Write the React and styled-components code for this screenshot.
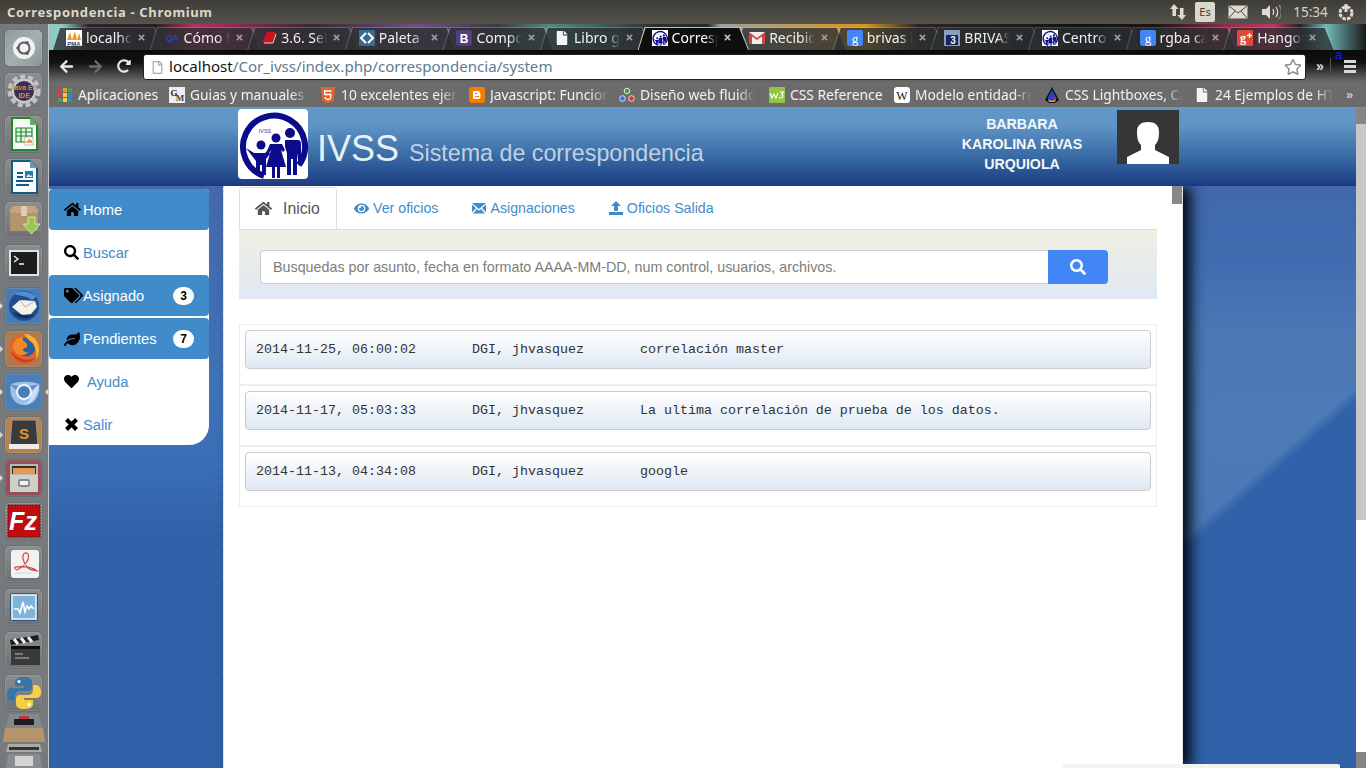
import React from "react"
import styled, { createGlobalStyle, css } from "styled-components"
import {
  FaHome, FaSearch, FaTags, FaLeaf, FaHeart, FaTimes, FaEye,
  FaArrowLeft, FaArrowRight, FaRedoAlt, FaRegFile, FaRegStar, FaFile,
} from "react-icons/fa"

const uiFont = `"Noto Sans", "Open Sans", sans-serif`
const webFont = `"Liberation Sans", Arial, sans-serif`

const Global = createGlobalStyle`
  html, body { margin: 0; padding: 0; height: 100%; overflow: hidden; background: #3161a9; }
  * { box-sizing: border-box; }
  #root { height: 100%; }
`

const Desktop = styled.div`
  position: relative;
  width: 1366px;
  height: 768px;
  overflow: hidden;
  display: flex;
  flex-direction: column;
  font-family: ${webFont};
`

/* ---- barra superior de ubuntu ---- */
const TitleBar = styled.div`
  height: 24px;
  flex: none;
  display: flex;
  align-items: center;
  padding: 0 8px 0 7px;
  background: linear-gradient(#3d3c37, #55534b);
`
const WindowTitle = styled.div`
  flex: 1;
  font: 700 13px ${uiFont};
  letter-spacing: 0.65px;
  color: #dcd8cc;
`
const Indicators = styled.div`
  display: flex;
  align-items: center;
  color: #dfdbd2;
`
const Indicator = styled.div`
  display: flex;
  align-items: center;
  justify-content: center;
  width: ${(p) => p.$w}px;
`
const LangBox = styled.div`
  width: 20px;
  height: 20px;
  border-radius: 2px;
  background: #dbd7cb;
  color: #3c3b37;
  font: 400 11px/20px ${uiFont};
  text-align: center;
`
const Clock = styled.div`
  font: 400 13.5px ${uiFont};
  width: 48px;
  padding-left: 1px;
  text-align: center;
  color: #d8d4c8;
`

const Workspace = styled.div`
  flex: 1;
  display: flex;
  min-height: 0;
`

/* ---- launcher ---- */
const Launcher = styled.div`
  width: 49px;
  flex: none;
  background: #777a7c;
  border-right: 1px solid #c4c6c6;
  padding: 6px 0 0 5px;
  display: flex;
  flex-direction: column;
  gap: 7px;
  overflow: hidden;
`
const Tile = styled.div`
  position: relative;
  width: 37px;
  height: 36px;
  flex: none;
  border-radius: 5px;
  display: flex;
  align-items: center;
  justify-content: center;
  background: ${(p) => p.$bg || "linear-gradient(#8b8e8f, #6f7274)"};
  box-shadow: inset 0 0 0 1px rgba(255, 255, 255, 0.1), 0 0 0 1px rgba(0, 0, 0, 0.08);
  ${(p) => p.$pip && css`
    &::before {
      content: "";
      position: absolute;
      left: -5px;
      top: 15px;
      border: 3px solid transparent;
      border-left: 3px solid #d8d8d8;
    }
  `}
  ${(p) => p.$pipRight && css`
    &::after {
      content: "";
      position: absolute;
      right: -6px;
      top: 15px;
      border: 3px solid transparent;
      border-right: 3px solid #d8d8d8;
    }
  `}
`

const UbuntuIcon = () => (
  <svg width="36" height="36" viewBox="0 0 36 36">
    <circle cx="18" cy="18" r="11" fill="#f2f2f2" />
    <circle cx="18" cy="18" r="5.6" fill="none" stroke="#5b5b5b" strokeWidth="2" />
    <circle cx="12" cy="18" r="1.7" fill="#5b5b5b" />
    <circle cx="21" cy="12.8" r="1.7" fill="#5b5b5b" />
    <circle cx="21" cy="23.2" r="1.7" fill="#5b5b5b" />
  </svg>
)
const JavaIcon = () => (
  <svg width="36" height="36" viewBox="0 0 36 36">
    <circle cx="18" cy="18" r="14.5" fill="none" stroke="#c4c4c4" strokeWidth="4" strokeDasharray="5 3" />
    <circle cx="18" cy="18" r="12.5" fill="#c9c9c9" />
    <circle cx="18" cy="18" r="10" fill="#3b2d55" />
    <text x="18" y="17" textAnchor="middle" fontSize="7" fontWeight="700" fill="#d88a2c" fontFamily="Liberation Sans">Java EE</text>
    <text x="18" y="25" textAnchor="middle" fontSize="7" fontWeight="700" fill="#d88a2c" fontFamily="Liberation Sans">IDE</text>
  </svg>
)
const DocShape = ({ color, fold, children }) => (
  <svg width="36" height="36" viewBox="0 0 36 36">
    <path d="M6 2h18l7 7v25H6z" fill="#fafafa" stroke={color} strokeWidth="2" />
    <path d="M24 1l8 8h-8z" fill={fold} />
    {children}
  </svg>
)
const CalcIcon = () => (
  <DocShape color="#1f8a25" fold="#5bb05f">
    <path d="M10 12h16v14H10z" fill="#e7f3e4" stroke="#1f8a25" strokeWidth="1.2" />
    <path d="M10 16h16M10 20h16M15 12v14M20 12v14" stroke="#1f8a25" strokeWidth="1.2" />
    <path d="M19 21h8v8h-8z" fill="#fff" stroke="#999" strokeWidth=".6" />
    <path d="M21 27v-2M23 27v-4M25 27v-3" stroke="#d9622b" strokeWidth="1.3" />
  </DocShape>
)
const WriterIcon = () => (
  <DocShape color="#135a86" fold="#6a97b6">
    <path d="M11 14h6M11 18h6M10 22h17M10 26h13" stroke="#135a86" strokeWidth="1.8" />
    <path d="M19 12h8v7h-8z" fill="#2c78a8" />
    <path d="M20 18l2.5-3 2 2 1-1 1 2z" fill="#e3eef5" />
  </DocShape>
)
const BoxIcon = () => (
  <svg width="36" height="36" viewBox="0 0 36 36">
    <path d="M4 8l3-4h22l3 4v21H4z" fill="#c2a67f" />
    <path d="M4 11h28v18H4z" fill="#b4946b" />
    <path d="M15 4h6v10h-6z" fill="#dccbb0" />
    <path d="M22 15h7v7h5l-8.5 10L17 22h5z" fill="#9ac653" stroke="#dfeebd" strokeWidth=".8" />
  </svg>
)
const TerminalIcon = () => (
  <svg width="36" height="36" viewBox="0 0 36 36">
    <path d="M3 5h30v26H3z" fill="#e2e2e2" />
    <path d="M5 7h26v22H5z" fill="#1d1d1d" />
    <path d="M8 11l4 3-4 3M13 19h5" fill="none" stroke="#f0f0f0" strokeWidth="1.4" />
  </svg>
)
const ThunderbirdIcon = () => (
  <svg width="36" height="36" viewBox="0 0 36 36">
    <circle cx="18" cy="18" r="15" fill="#1f4f8c" />
    <path d="M8 6c6-4 16-3 22 3l-4 3C22 8 14 8 8 6z" fill="#4f8ed0" />
    <path d="M6 19l8-7 15 1 2 6-6 7-9 1z" fill="#f4f1e8" />
    <path d="M14 12l5 7 10-6" fill="none" stroke="#b8b2a2" strokeWidth="1" />
    <path d="M7 24c4 6 14 9 22 3-4 1-12 1-22-3z" fill="#0f2f60" />
  </svg>
)
const FirefoxIcon = () => (
  <svg width="36" height="36" viewBox="0 0 36 36">
    <circle cx="18" cy="18" r="15" fill="#e5622a" />
    <circle cx="20" cy="16" r="9.5" fill="#2e5e9e" />
    <path d="M18 3c9 0 15 7 15 15 0 4-1 7-3 10 1-7-1-15-6-18-2-2-4-4-6-7z" fill="#f6b12f" />
    <path d="M9 10c2-3 5-4 8-4-1 2 0 4 2 5 3 2 3 5 0 6-4 1-1 5 3 4-3 5-11 4-14-2-2-3-1-6 1-9z" fill="#f08a24" />
    <path d="M5 20c2 8 10 13 18 11 3-1 5-2 7-5-7 5-18 3-25-6z" fill="#c9401d" />
  </svg>
)
const ChromiumIcon = () => (
  <svg width="36" height="36" viewBox="0 0 36 36">
    <path d="M5 10c8-3 20-3 28 0 2 10-4 21-15 21C8 31 2 20 5 10z" fill="#9cc0e6" />
    <path d="M4 10c8 3 20 3 29 0l-8 8c-2-3-10-3-13 0z" fill="#5f8fc6" />
    <path d="M25 18c1 6-3 13-9 13 9 1 16-9 17-21z" fill="#cfe0f2" />
    <circle cx="18" cy="18" r="7" fill="#4c7db9" stroke="#eef4fb" strokeWidth="2" />
  </svg>
)
const SublimeIcon = () => (
  <svg width="36" height="36" viewBox="0 0 36 36">
    <path d="M6 3h24l2 25H4z" fill="#3a3a3a" stroke="#9a9a9a" strokeWidth="1" />
    <path d="M3 27h30v5H3z" fill="#ececec" />
    <text x="18" y="22" textAnchor="middle" fontSize="15" fontWeight="700" fill="#e8912d" fontFamily="Liberation Sans">S</text>
  </svg>
)
const FilesIcon = () => (
  <svg width="36" height="36" viewBox="0 0 36 36">
    <path d="M4 4h28v28H4z" fill="#b9b9b6" />
    <path d="M6 6h24v8H6z" fill="#33302c" />
    <path d="M7 8h22v6H7z" fill="#e59a55" />
    <path d="M4 15h28v17H4z" fill="#cfcfcc" />
    <rect x="13" y="20" width="10" height="6" rx="1" fill="#f2f2f0" stroke="#6a6a68" strokeWidth="1.3" />
  </svg>
)
const FilezillaIcon = () => (
  <svg width="36" height="36" viewBox="0 0 36 36">
    <path d="M2 2h32v32H2z" fill="#bf0d12" stroke="#7c0a0c" strokeDasharray="2 1" />
    <text x="17" y="27" textAnchor="middle" fontSize="25" fontWeight="700" fontStyle="italic" fill="#fff" fontFamily="Liberation Sans">Fz</text>
  </svg>
)
const PdfIcon = () => (
  <svg width="36" height="36" viewBox="0 0 36 36">
    <rect x="5" y="4" width="28" height="28" rx="3" fill="#f2f2f2" />
    <path d="M9 21c8-1 18 0 22 4-4-1-7-1-9-3-5-5-7-13-3-15 4-1 5 5 1 10-3 4-7 6-9 7-2-1-3-2-2-3z" fill="none" stroke="#d8433e" strokeWidth="1.2" />
    <path d="M9 27h16" stroke="#ddd" strokeWidth="1.5" />
  </svg>
)
const MonitorIcon = () => (
  <svg width="36" height="36" viewBox="0 0 36 36">
    <rect x="4" y="4" width="28" height="28" rx="3" fill="#2e5d83" />
    <rect x="6" y="6" width="24" height="24" fill="#7fb4da" stroke="#eef6fb" strokeWidth="1.6" />
    <path d="M8 20l4 0 2 4 3-11 2 10 2-6 2 3 2-3 3 3" fill="none" stroke="#fff" strokeWidth="1.6" />
  </svg>
)
const ClapperIcon = () => (
  <svg width="36" height="36" viewBox="0 0 36 36">
    <path d="M5 14h29v19H5z" fill="#3a3a38" />
    <path d="M5 14h29v3H5z" fill="#111" />
    <path d="M4 8l28-5 1 5-28 5z" fill="#1d1d1d" />
    <path d="M8 7l4 5M15 6l4 5M22 5l4 5" stroke="#eee" strokeWidth="3" />
    <path d="M9 22h8M9 26h14" stroke="#bbb" strokeWidth="1.2" />
  </svg>
)
const PythonIcon = () => (
  <svg width="36" height="36" viewBox="0 0 36 36">
    <path d="M18 2c-6 0-9 2-9 5v4h9v2H6c-4 0-5 3-5 6s1 7 5 7h3v-5c0-3 2-5 5-5h8c3 0 4-2 4-4V7c0-3-3-5-8-5z" fill="#3a75a8" />
    <path d="M18 34c6 0 9-2 9-5v-4h-9v-2h12c4 0 5-3 5-6s-1-7-5-7h-3v5c0 3-2 5-5 5h-8c-3 0-4 2-4 4v5c0 3 3 5 8 5z" fill="#f7cf45" />
    <circle cx="13" cy="6.5" r="1.6" fill="#fff" />
    <circle cx="23" cy="29.5" r="1.6" fill="#fff" />
  </svg>
)

const launcherItems = [
  { icon: UbuntuIcon, bg: "linear-gradient(135deg, #8f999b, #a4b0b2 50%, #8a9496)" },
  { icon: JavaIcon },
  { icon: CalcIcon },
  { icon: WriterIcon },
  { icon: BoxIcon },
  { icon: TerminalIcon },
  { icon: ThunderbirdIcon, bg: "#4a7bb5", pip: true },
  { icon: FirefoxIcon, bg: "#ad7a52", pip: true },
  { icon: ChromiumIcon, bg: "#4b7db9", pip: true, pipRight: true },
  { icon: SublimeIcon, bg: "#b4834f", pip: true },
  { icon: FilesIcon, bg: "#96505c", pip: true },
  { icon: FilezillaIcon },
  { icon: PdfIcon },
  { icon: MonitorIcon },
  { icon: ClapperIcon },
  { icon: PythonIcon },
]

const LauncherFold = styled.svg`
  flex: none;
  margin: -4px 0 0 -5px;
`

/* ---- navegador ---- */
const Browser = styled.div`
  flex: 1;
  min-width: 0;
  display: flex;
  flex-direction: column;
`
const TabStrip = styled.div`
  height: 26px;
  flex: none;
  display: flex;
  padding: 3px 0 0 10px;
  background: linear-gradient(90deg, #8cc9c4 0, #8cc9c4 1%, #32202c 3%, #252025 8%, #b5305f 11%, #8f2b55 14%, #3a2836 20%, #6e4f80 28%, #3b3a48 34%, #4f8a7e 38%, #2c3030 46%, #1c2c2c 50%, #9aa0a0 51%, #d79320 62%, #2a2520 66%, #141414 78%, #1b1416 84%, #a02c50 90%, #c53262 93%, #272025 95%, #70b9b8 97%, #1a1a1a 100%);
`
const TabItem = styled.div`
  position: relative;
  width: 97.6px;
  flex: none;
  display: flex;
  align-items: center;
  padding: 0 0 2px 7px;
  color: ${(p) => (p.$active ? "#fff" : "#f0f0f0")};
  font: 400 14px ${uiFont};
  z-index: ${(p) => (p.$active ? 1 : 0)};
  &::before {
    content: "";
    position: absolute;
    inset: 0 -7px 0 -7px;
    clip-path: polygon(7px 0, calc(100% - 9px) 0, 100% 100%, 0 100%);
    background: ${(p) => (p.$active ? "#bbb" : "rgba(230,230,230,.22)")};
  }
  &::after {
    content: "";
    position: absolute;
    inset: 1px -6px 0 -6px;
    clip-path: polygon(7px 0, calc(100% - 9px) 0, 100% 100%, 0 100%);
    background: ${(p) => (p.$active ? "#0e0e0e" : "rgba(30,34,36,.74)")};
  }
`
const TabIconBox = styled.span`
  position: relative;
  z-index: 1;
  width: 16px;
  height: 16px;
  flex: none;
  display: flex;
  align-items: center;
  justify-content: center;
  margin-right: 4px;
`
const TabLabel = styled.span`
  position: relative;
  z-index: 1;
  width: 46px;
  flex: none;
  overflow: hidden;
  white-space: nowrap;
  mask-image: linear-gradient(90deg, #000 72%, transparent);
`
const TabClose = styled(FaTimes)`
  position: relative;
  z-index: 1;
  margin-left: 5px;
  width: 9px;
  height: 9px;
  color: ${(p) => (p.$active ? "#bbb" : "#9a9a9a")};
`
const Toolbar = styled.div`
  height: 32px;
  flex: none;
  display: flex;
  align-items: center;
  padding-left: 10px;
  background: linear-gradient(#0b0b0b, #111 38%, #6b6b6b);
`
const NavButton = styled.div`
  width: 29px;
  display: flex;
  align-items: center;
  color: ${(p) => (p.$off ? "#6d6d6d" : "#e8e8e8")};
`
const Omnibox = styled.div`
  width: 1163px;
  height: 26px;
  margin: 2px 0 0 -3px;
  display: flex;
  align-items: center;
  padding: 0 3px 0 7px;
  background: #fff;
  border: 1px solid #222;
  border-radius: 3px;
  font: 400 15.1px ${uiFont};
  color: #5d7b8f;
`
const OmniText = styled.div`
  flex: 1;
  margin-left: 5px;
  padding-bottom: 3px;
  white-space: nowrap;
  b { font-weight: 400; color: #111; }
`
const ToolbarEnd = styled.div`
  position: relative;
  flex: 1;
  display: flex;
  align-items: center;
  padding-left: 10px;
  color: #ddd;
  font: 700 14px ${webFont};
`
const Divider = styled.div`
  width: 1px;
  height: 16px;
  margin: 0 13px 0 6px;
  background: #555;
`
const MenuIcon = styled.div`
  display: flex;
  flex-direction: column;
  gap: 2px;
  span { width: 12px; height: 3px; background: #d8d8d8; display: block; }
`
const ExtensionMark = styled.span`
  position: absolute;
  left: 29px;
  top: -11px;
  color: #1a1aff;
  font: 400 13px ${webFont};
`
const Bookmarks = styled.div`
  height: 26px;
  flex: none;
  display: flex;
  align-items: center;
  padding-left: 8px;
  background: #6b6b6b;
  border-bottom: 1px solid #8e8e8e;
`
const Bookmark = styled.div`
  width: ${(p) => p.$w}px;
  flex: none;
  display: flex;
  align-items: center;
  color: #f2f2f2;
  font: 400 13.8px ${uiFont};
  white-space: nowrap;
`
const BookmarkIcon = styled.span`
  width: 16px;
  height: 16px;
  flex: none;
  margin-right: 5px;
  display: flex;
  align-items: center;
  justify-content: center;
`
const BookmarkLabel = styled.span`
  overflow: hidden;
  width: ${(p) => p.$w}px;
  ${(p) => p.$fade && css`mask-image: linear-gradient(90deg, #000 85%, transparent);`}
`
const MoreMarks = styled.span`
  color: #ccc;
  font: 700 13px ${webFont};
`

/* favicons */
const Favicon = ({ kind }) => {
  switch (kind) {
    case "pma":
      return (
        <svg width="16" height="16" viewBox="0 0 16 16">
          <rect width="16" height="16" fill="#fff" />
          <path d="M1 10l3-8 2 8zM6 10l3-9 2 9zM11 10l2-7 2 7z" fill="#f29a1f" />
          <text x="8" y="15.5" textAnchor="middle" fontSize="6" fontWeight="700" fill="#345" fontFamily="Liberation Sans">PMA</text>
        </svg>
      )
    case "qa":
      return <svg width="16" height="16" viewBox="0 0 16 16"><text x="8" y="11" textAnchor="middle" fontSize="8.5" fontWeight="700" fill="#2846b8" fontFamily="Liberation Sans">QA</text></svg>
    case "book":
      return (
        <svg width="16" height="16" viewBox="0 0 16 16">
          <path d="M1 12L6 2h9l-4 11H3c-1 0-1.500-1-.8-1.500z" fill="#c8141c" />
          <path d="M3 13l9 0 3-9" fill="none" stroke="#fff" strokeWidth=".8" />
        </svg>
      )
    case "paleta":
      return (
        <svg width="16" height="16" viewBox="0 0 16 16">
          <rect width="16" height="16" fill="#3b6a91" />
          <path d="M7 3L2 8l5 5M9 3l5 5-5 5" fill="none" stroke="#fff" strokeWidth="2" />
        </svg>
      )
    case "bootstrap":
      return (
        <svg width="16" height="16" viewBox="0 0 16 16">
          <rect width="16" height="16" rx="3" fill="#563d7c" />
          <text x="8" y="12.500" textAnchor="middle" fontSize="12" fontWeight="700" fill="#fff" fontFamily="Liberation Sans">B</text>
        </svg>
      )
    case "doc":
      return <FaFile size={14} color="#f4f4f4" />
    case "ivss":
      return <IvssLogo size={16} bg="#fff" />
    case "gmail":
      return (
        <svg width="16" height="16" viewBox="0 0 16 16">
          <rect y="2" width="16" height="12" fill="#eee" />
          <path d="M0 2l8 6 8-6v12h-3V6.500L8 10 3 6.500V14H0z" fill="#d9443a" />
        </svg>
      )
    case "google":
      return (
        <svg width="16" height="16" viewBox="0 0 16 16">
          <rect width="16" height="16" rx="2" fill="#4285f4" />
          <text x="8" y="12.500" textAnchor="middle" fontSize="13" fill="#fff" fontFamily="Liberation Serif">g</text>
        </svg>
      )
    case "brivas":
      return (
        <svg width="16" height="16" viewBox="0 0 16 16">
          <rect width="16" height="16" fill="#8c9cc0" />
          <rect x="2" y="5" width="12" height="10" fill="#16255f" />
          <text x="9" y="14" textAnchor="middle" fontSize="10" fontWeight="700" fill="#eee" fontFamily="Liberation Sans">3</text>
        </svg>
      )
    case "gplus":
      return (
        <svg width="16" height="16" viewBox="0 0 16 16">
          <rect width="16" height="16" rx="1" fill="#dc4a38" />
          <text x="6" y="12" textAnchor="middle" fontSize="12" fontWeight="700" fill="#fff" fontFamily="Liberation Serif">g</text>
          <path d="M10 5.500h5M12.500 3v5" stroke="#fff" strokeWidth="1.300" />
        </svg>
      )
    case "apps":
      return (
        <svg width="14" height="14" viewBox="0 0 14 14">
          {["#e33", "#e93", "#3a5", "#e33", "#fc3", "#38c", "#3a5", "#fc3", "#38c"].map((c, i) => (
            <rect key={i} x={(i % 3) * 5} y={Math.floor(i / 3) * 5} width="4" height="4" fill={c} />
          ))}
        </svg>
      )
    case "guias":
      return (
        <svg width="16" height="16" viewBox="0 0 16 16">
          <rect width="16" height="16" fill="#eee" />
          <text x="5" y="9" textAnchor="middle" fontSize="9" fontWeight="700" fill="#222" fontFamily="Liberation Serif">G</text>
          <text x="11" y="14" textAnchor="middle" fontSize="9" fontWeight="700" fill="#444" fontFamily="Liberation Serif">M</text>
        </svg>
      )
    case "html5":
      return (
        <svg width="16" height="16" viewBox="0 0 16 16">
          <path d="M1 0h14l-1.300 14L8 16l-5.700-2z" fill="#e8622c" />
          <path d="M11.500 4h-7l.3 3.500h6l-.3 4L8 12.500l-2.500-1-.1-1.500" fill="none" stroke="#fff" strokeWidth="1.300" />
        </svg>
      )
    case "blogger":
      return (
        <svg width="16" height="16" viewBox="0 0 16 16">
          <rect width="16" height="16" rx="3" fill="#f57d00" />
          <path d="M5 4h4a2 2 0 012 2v1h.5v3a2 2 0 01-2 2H5.500A1.500 1.500 0 014 10.500v-5A1.500 1.500 0 015 4z" fill="#fff" />
          <path d="M6 6.500h2.500M6 9.500h4" stroke="#f57d00" strokeWidth="1.200" />
        </svg>
      )
    case "dots":
      return (
        <svg width="16" height="16" viewBox="0 0 16 16">
          <circle cx="8" cy="4" r="2.800" fill="#2fa84f" stroke="#fff" strokeWidth=".8" />
          <circle cx="3.500" cy="11.500" r="2.800" fill="#2f78d0" stroke="#fff" strokeWidth=".8" />
          <circle cx="12.500" cy="11.500" r="2.800" fill="#d8342a" stroke="#fff" strokeWidth=".8" />
        </svg>
      )
    case "w3":
      return (
        <svg width="16" height="16" viewBox="0 0 16 16">
          <rect width="16" height="16" rx="1" fill="#8ec63f" />
          <path d="M1 6l2 5 2-4 2 4 2-5M11 5h3.500l-2 2.500c2 0 2 3.500-.5 3.500-1 0-1.500-.5-1.500-1" fill="none" stroke="#fff" strokeWidth="1.200" />
        </svg>
      )
    case "wiki":
      return (
        <svg width="16" height="16" viewBox="0 0 16 16">
          <rect width="16" height="16" rx="3" fill="#fff" />
          <text x="8" y="12.500" textAnchor="middle" fontSize="12" fill="#111" fontFamily="Liberation Serif">W</text>
        </svg>
      )
    case "drop":
      return (
        <svg width="16" height="16" viewBox="0 0 16 16">
          <path d="M8 0L1 13l4 3h6l4-3z" fill="#111" />
          <path d="M8 3C6 7 4 9 4 11.500 4 14 6 15 8 15s4-1 4-3.500C12 9 10 7 8 3z" fill="#2a3fd0" />
          <path d="M4 12c2 2 6 2 8 0l-1 3H5z" fill="#e8a020" />
          <path d="M11 9l1.500 3-3 2z" fill="#d8342a" />
        </svg>
      )
    default:
      return null
  }
}

const tabs = [
  { label: "localhost", icon: "pma" },
  { label: "Cómo f", icon: "qa" },
  { label: "3.6. Sel", icon: "book" },
  { label: "Paleta", icon: "paleta" },
  { label: "Compo", icon: "bootstrap" },
  { label: "Libro g", icon: "doc" },
  { label: "Corresp", icon: "ivss", active: true },
  { label: "Recibid", icon: "gmail" },
  { label: "brivas i", icon: "google" },
  { label: "BRIVAS", icon: "brivas" },
  { label: "Centro", icon: "ivss" },
  { label: "rgba ca", icon: "google" },
  { label: "Hangou", icon: "gplus" },
]

const marks = [
  { label: "Aplicaciones", icon: "apps", w: 112, lw: 81 },
  { label: "Guias y manuales para", icon: "guias", w: 151, lw: 119, fade: true },
  { label: "10 excelentes ejemplos", icon: "html5", w: 149, lw: 117, fade: true },
  { label: "Javascript: Funciones", icon: "blogger", w: 150, lw: 118, fade: true },
  { label: "Diseño web fluido", icon: "dots", w: 150, lw: 115, fade: true },
  { label: "CSS Reference", icon: "w3", w: 125, lw: 93 },
  { label: "Modelo entidad-relación", icon: "wiki", w: 150, lw: 117, fade: true },
  { label: "CSS Lightboxes, Calendar", icon: "drop", w: 150, lw: 118, fade: true },
  { label: "24 Ejemplos de HTML5", icon: "doc", w: 152, lw: 118, fade: true },
]

/* ---- pagina ---- */
const PageRow = styled.div`
  flex: 1;
  min-height: 0;
  display: flex;
`
const Page = styled.div`
  flex: 1;
  min-width: 0;
  display: flex;
  flex-direction: column;
`
const PageScrollbar = styled.div`
  width: 10px;
  flex: none;
  display: flex;
  flex-direction: column;
  background: #fff;
`
const ScrollStep = styled.div`
  height: 16px;
  background: #858585;
`
const ScrollThumb = styled.div`
  height: 396px;
  background: #c8c8c8;
`
const ScrollFill = styled.div`
  flex: 1;
`

const Header = styled.header`
  position: relative;
  z-index: 2;
  height: 78px;
  flex: none;
  display: flex;
  padding: 1px 177px 0 189px;
  color: #fff;
  background: linear-gradient(#6297c9, #5f94c5 22%, #3a6da6 60%, #1f3f84 97%, #1a357c);
`
const LogoBox = styled.div`
  width: 70px;
  height: 70px;
  border-radius: 4px;
  overflow: hidden;
  flex: none;
`
const Brand = styled.div`
  margin: 18px 0 0 9px;
  flex: 1;
  white-space: nowrap;
  font-size: 36px;
  line-height: 44px;
  color: #e6f0f8;
`
const BrandSub = styled.span`
  margin-left: 10px;
  font-size: 23.25px;
  color: #c1d0e0;
`
const UserName = styled.div`
  width: 170px;
  margin-top: 5px;
  font-size: 14.2px;
  font-weight: 700;
  line-height: 20px;
  text-align: center;
  color: #f5f8fb;
`
const Avatar = styled.div`
  width: 62px;
  height: 54px;
  margin: 1px 0 0 10px;
  background: #363636;
`

const Stage = styled.div`
  flex: 1;
  min-height: 0;
  display: flex;
  background: linear-gradient(180deg, #4569ad 0, #3f72b6 35%, #3a6fb6 47%, #3161a9 60%, #3060a8 100%);
`
const Sidebar = styled.nav`
  width: 160px;
  height: 256px;
  margin: 3px 14px 0 0;
  flex: none;
  background: #fff;
  border-radius: 0 4px 20px 0;
  display: flex;
  flex-direction: column;
  gap: 2px;
`
const SideItem = styled.a`
  height: 41px;
  flex: none;
  display: flex;
  align-items: center;
  padding: 0 15px;
  border-radius: 4px;
  font-size: 14.7px;
  color: ${(p) => (p.$active ? "#fff" : "#428bca")};
  background: ${(p) => (p.$active ? "#428bca" : "transparent")};
  svg { color: #000; flex: none; }
`
const SideText = styled.span`
  margin-left: ${(p) => p.$gap}px;
  flex: 1;
`
const Badge = styled.span`
  width: 21px;
  height: 18px;
  border-radius: 10px;
  background: #fff;
  color: #000;
  font-size: 12px;
  font-weight: 700;
  line-height: 18px;
  text-align: center;
`
const Panel = styled.main`
  position: relative;
  z-index: 1;
  width: 960px;
  flex: none;
  background: #fff;
  padding: 1px 25px 0 15px;
  border-left: 1px dotted #c8c8c8;
  border-right: 1px dotted #c8c8c8;
  box-shadow: 9px 0 13px -1px rgba(0, 5, 15, 0.95);
`
const PanelThumb = styled.div`
  position: absolute;
  top: 0;
  right: 0;
  width: 10px;
  height: 18px;
  background: #888;
`
const NavTabs = styled.div`
  display: flex;
  height: 42px;
  font-size: 14.2px;
`
const NavTab = styled.a`
  display: flex;
  align-items: center;
  height: 42px;
  color: #428bca;
  ${(p) => p.$active
    ? css`
        width: 98px;
        padding: 0 0 0 15px;
        border: 1px solid #ddd;
        border-bottom: 0;
        border-radius: 4px 4px 0 0;
        color: #555;
        font-size: 15.8px;
      `
    : css`
        padding: 0 ${p.$pad}px 0 0;
        svg { margin-right: 4px; flex: none; }
      `}
`
const InicioText = styled.span`
  margin-left: 11px;
`
const NavTabSpacer = styled.div`
  width: 17px;
`
const SearchBand = styled.div`
  height: 70px;
  padding: 20px 49px 0 21px;
  display: flex;
  border-top: 1px solid #ddd;
  background: linear-gradient(#f0efe3, #dfe8f3);
`
const SearchInput = styled.input`
  flex: 1;
  height: 34px;
  padding: 0 12px;
  border: 1px solid #ccc;
  border-right: 0;
  border-radius: 4px 0 0 4px;
  background: #fff;
  outline: none;
  font: 400 14.3px ${webFont};
  &::placeholder { color: #7d7d7d; opacity: 1; }
`
const SearchButton = styled.button`
  width: 60px;
  height: 34px;
  border: 0;
  padding: 0;
  border-radius: 0 4px 4px 0;
  background: #4285f4;
  color: #fff;
  display: flex;
  align-items: center;
  justify-content: center;
`
const ResultList = styled.div`
  margin-top: 25px;
  border: 1px solid #eee;
`
const ResultRow = styled.div`
  padding: 5px 5px 15px;
  & + & { border-top: 2px solid #eee; }
`
const ResultCard = styled.pre`
  margin: 0;
  height: 39px;
  padding: 0 10px;
  border: 1px solid #ccc;
  border-radius: 4px;
  background: linear-gradient(#fff, #dfe8f3);
  font: 400 13.33px/37px "Liberation Mono", "Courier New", monospace;
  color: #333;
`
const Gutter = styled.div`
  flex: 1;
  background:
    linear-gradient(139deg, transparent 0, transparent 48%, #3161a9 50%),
    linear-gradient(180deg, #4168ad 0, #3f6cb0 12%, #4a78b5 25%, #4c7bb7 40%, #4474b4 100%);
`
const Notice = styled.div`
  position: absolute;
  left: 1063px;
  bottom: 0;
  width: 277px;
  height: 4px;
  z-index: 3;
  background: #f5f3ef;
  border-radius: 2px 2px 0 0;
`

const IvssLogo = ({ size, bg }) => (
  <svg width={size} height={size} viewBox="0 0 70 70">
    <rect width="70" height="70" fill={bg} />
    <path d="M26 67A31 31 0 1 1 61 56" fill="none" stroke="#0b0b8c" strokeWidth="6" />
    <circle cx="23" cy="36" r="4.500" fill="#0b0b8c" />
    <circle cx="38" cy="29" r="4.500" fill="#0b0b8c" />
    <circle cx="52" cy="24" r="5" fill="#0b0b8c" />
    <path d="M8 39l8 5h11l3-3 2 4-4 5v16h-4V56h-2v10h-4V52z" fill="#0b0b8c" />
    <path d="M32 35h12l3 6-2 2-2-2 5 17h-6v11h-3V58h-2v11h-3V58h-6l5-17-2 3-2-2z" fill="#0b0b8c" />
    <path d="M47 31h13q3 0 3 4v16l-2 7-2-14v22h-4V50h-2v16h-4V44l-2-6z" fill="#0b0b8c" />
    <text x="27" y="24" textAnchor="middle" fontSize="5.500" fill="#3a3aa8" fontFamily="Liberation Sans">IVSS</text>
  </svg>
)

const EnvelopeGlyph = () => (
  <svg width="14" height="12" viewBox="0 0 14 12">
    <path d="M0 1h14L7 7z" fill="currentColor" />
    <path d="M0 2.500l4 3.500-4 4.500zM14 2.500L10 6l4 4.500zM1 11.500l4-4.500 2 1.700 2-1.700 4 4.500z" fill="currentColor" />
  </svg>
)
const UploadGlyph = () => (
  <svg width="14" height="14" viewBox="0 0 14 14">
    <path d="M7 0l5 5H9v5H5V5H2zM0 11h14v3H0z" fill="currentColor" />
  </svg>
)
const RemoveGlyph = () => (
  <svg width="15" height="15" viewBox="0 0 15 15">
    <path d="M2.500 2.500l10 10M12.500 2.500l-10 10" stroke="currentColor" strokeWidth="4" />
  </svg>
)

const results = [
  "2014-11-25, 06:00:02       DGI, jhvasquez       correlación master",
  "2014-11-17, 05:03:33       DGI, jhvasquez       La ultima correlación de prueba de los datos.",
  "2014-11-13, 04:34:08       DGI, jhvasquez       google",
]

export default function App() {
  return (
    <Desktop>
      <Global />
      <TitleBar>
        <WindowTitle>Correspondencia - Chromium</WindowTitle>
        <Indicators>
          <Indicator $w={24}>
            <svg width="18" height="18" viewBox="0 0 18 18">
              <path d="M5 1l4.500 5H7v7H3.500V6H1zM13 17l-4.500-5H11V5h3.500v7H17z" fill="currentColor" />
            </svg>
          </Indicator>
          <Indicator $w={30}><LangBox>Es</LangBox></Indicator>
          <Indicator $w={36}>
            <svg width="20" height="14" viewBox="0 0 20 14">
              <rect x=".5" y=".5" width="19" height="13" fill="#dfdbd2" />
              <path d="M1 1l9 7 9-7M1 13l6-7M19 13l-6-7" fill="none" stroke="#4a4943" strokeWidth="1" />
            </svg>
          </Indicator>
          <Indicator $w={30}>
            <svg width="20" height="16" viewBox="0 0 20 16">
              <path d="M1 5h4l4-4v14l-4-4H1z" fill="currentColor" />
              <path d="M12 5c1 2 1 4 0 6M15 3c2 3 2 7 0 10" fill="none" stroke="currentColor" strokeWidth="1.300" />
              <path d="M18 1c3 4 3 10 0 14" fill="none" stroke="#88857b" strokeWidth="1.300" />
            </svg>
          </Indicator>
          <Clock>15:34</Clock>
          <Indicator $w={24}>
            <svg width="18" height="18" viewBox="0 0 18 18">
              <circle cx="9" cy="10" r="6" fill="none" stroke="currentColor" strokeWidth="3" strokeDasharray="3.500 1.200" />
              <path d="M9 1v8" stroke="currentColor" strokeWidth="3" />
            </svg>
          </Indicator>
        </Indicators>
      </TitleBar>

      <Workspace>
        <Launcher>
          {launcherItems.map((item, i) => (
            <Tile key={i} $bg={item.bg} $pip={item.pip} $pipRight={item.pipRight}>
              <item.icon />
            </Tile>
          ))}
          <LauncherFold width="48" height="54" viewBox="0 0 48 54">
            <path d="M9 0h30l3 14H6z" fill="#85888a" />
            <path d="M14 5h20v6H14z" fill="#1d1d1d" />
            <path d="M19 2h10v3H19z" fill="#b33" />
            <path d="M5 14h38l2 14H3z" fill="#b4946b" />
            <path d="M8 30h32l2 8H6z" fill="#a8aaa8" />
            <path d="M9 33h30v3H9z" fill="#333" />
            <path d="M8 40h32l2 14H6z" fill="#8a8d8e" />
            <path d="M15 42h18v10H15z" fill="#d5d5d5" />
          </LauncherFold>
        </Launcher>

        <Browser>
          <TabStrip>
            {tabs.map((t) => (
              <TabItem key={t.label} $active={t.active}>
                <TabIconBox><Favicon kind={t.icon} /></TabIconBox>
                <TabLabel>{t.label}</TabLabel>
                <TabClose $active={t.active} />
              </TabItem>
            ))}
          </TabStrip>
          <Toolbar>
            <NavButton><FaArrowLeft size={15} /></NavButton>
            <NavButton $off><FaArrowRight size={15} /></NavButton>
            <NavButton><FaRedoAlt size={14} /></NavButton>
            <Omnibox>
              <FaRegFile size={13} color="#a9a9a9" />
              <OmniText><b>localhost</b>/Cor_ivss/index.php/correspondencia/system</OmniText>
              <FaRegStar size={18} color="#8f8f8f" />
            </Omnibox>
            <ToolbarEnd>
              »
              <Divider />
              <ExtensionMark>a</ExtensionMark>
              <MenuIcon><span /><span /><span /></MenuIcon>
            </ToolbarEnd>
          </Toolbar>
          <Bookmarks>
            {marks.map((m) => (
              <Bookmark key={m.label} $w={m.w}>
                <BookmarkIcon><Favicon kind={m.icon} /></BookmarkIcon>
                <BookmarkLabel $w={m.lw} $fade={m.fade}>{m.label}</BookmarkLabel>
              </Bookmark>
            ))}
            <MoreMarks>»</MoreMarks>
          </Bookmarks>

          <PageRow>
            <Page>
              <Header>
                <LogoBox><IvssLogo size={70} bg="#fff" /></LogoBox>
                <Brand>IVSS<BrandSub>Sistema de correspondencia</BrandSub></Brand>
                <UserName>BARBARA<br />KAROLINA RIVAS<br />URQUIOLA</UserName>
                <Avatar>
                  <svg width="62" height="54" viewBox="0 0 62 54">
                    <path d="M10 54v-7l14-7v-5c-3-3-4-7-4-13 0-7 4-10 11-10s11 3 11 10c0 6-1 10-4 13v5l14 7v7z" fill="#fff" />
                  </svg>
                </Avatar>
              </Header>
              <Stage>
                <Sidebar>
                  <SideItem $active><FaHome size={17} /><SideText $gap={2}>Home</SideText></SideItem>
                  <SideItem><FaSearch size={15} /><SideText $gap={4}>Buscar</SideText></SideItem>
                  <SideItem $active><FaTags size={19} /><SideText $gap={0}>Asignado</SideText><Badge>3</Badge></SideItem>
                  <SideItem $active><FaLeaf size={16} /><SideText $gap={3}>Pendientes</SideText><Badge>7</Badge></SideItem>
                  <SideItem><FaHeart size={15} /><SideText $gap={8}>Ayuda</SideText></SideItem>
                  <SideItem><RemoveGlyph /><SideText $gap={4}>Salir</SideText></SideItem>
                </Sidebar>
                <Panel>
                  <PanelThumb />
                  <NavTabs>
                    <NavTab $active><FaHome size={17} /><InicioText>Inicio</InicioText></NavTab>
                    <NavTabSpacer />
                    <NavTab $pad={34}><FaEye size={15} />Ver oficios</NavTab>
                    <NavTab $pad={34}><EnvelopeGlyph />Asignaciones</NavTab>
                    <NavTab $pad={0}><UploadGlyph />Oficios Salida</NavTab>
                  </NavTabs>
                  <SearchBand>
                    <SearchInput placeholder="Busquedas por asunto, fecha en formato AAAA-MM-DD, num control, usuarios, archivos." />
                    <SearchButton aria-label="Buscar"><FaSearch size={16} /></SearchButton>
                  </SearchBand>
                  <ResultList>
                    {results.map((r) => (
                      <ResultRow key={r}><ResultCard>{r}</ResultCard></ResultRow>
                    ))}
                  </ResultList>
                </Panel>
                <Gutter />
              </Stage>
            </Page>
            <PageScrollbar>
              <ScrollStep />
              <ScrollThumb />
              <ScrollFill />
              <ScrollStep />
            </PageScrollbar>
          </PageRow>
        </Browser>
      </Workspace>
      <Notice />
    </Desktop>
  )
}
